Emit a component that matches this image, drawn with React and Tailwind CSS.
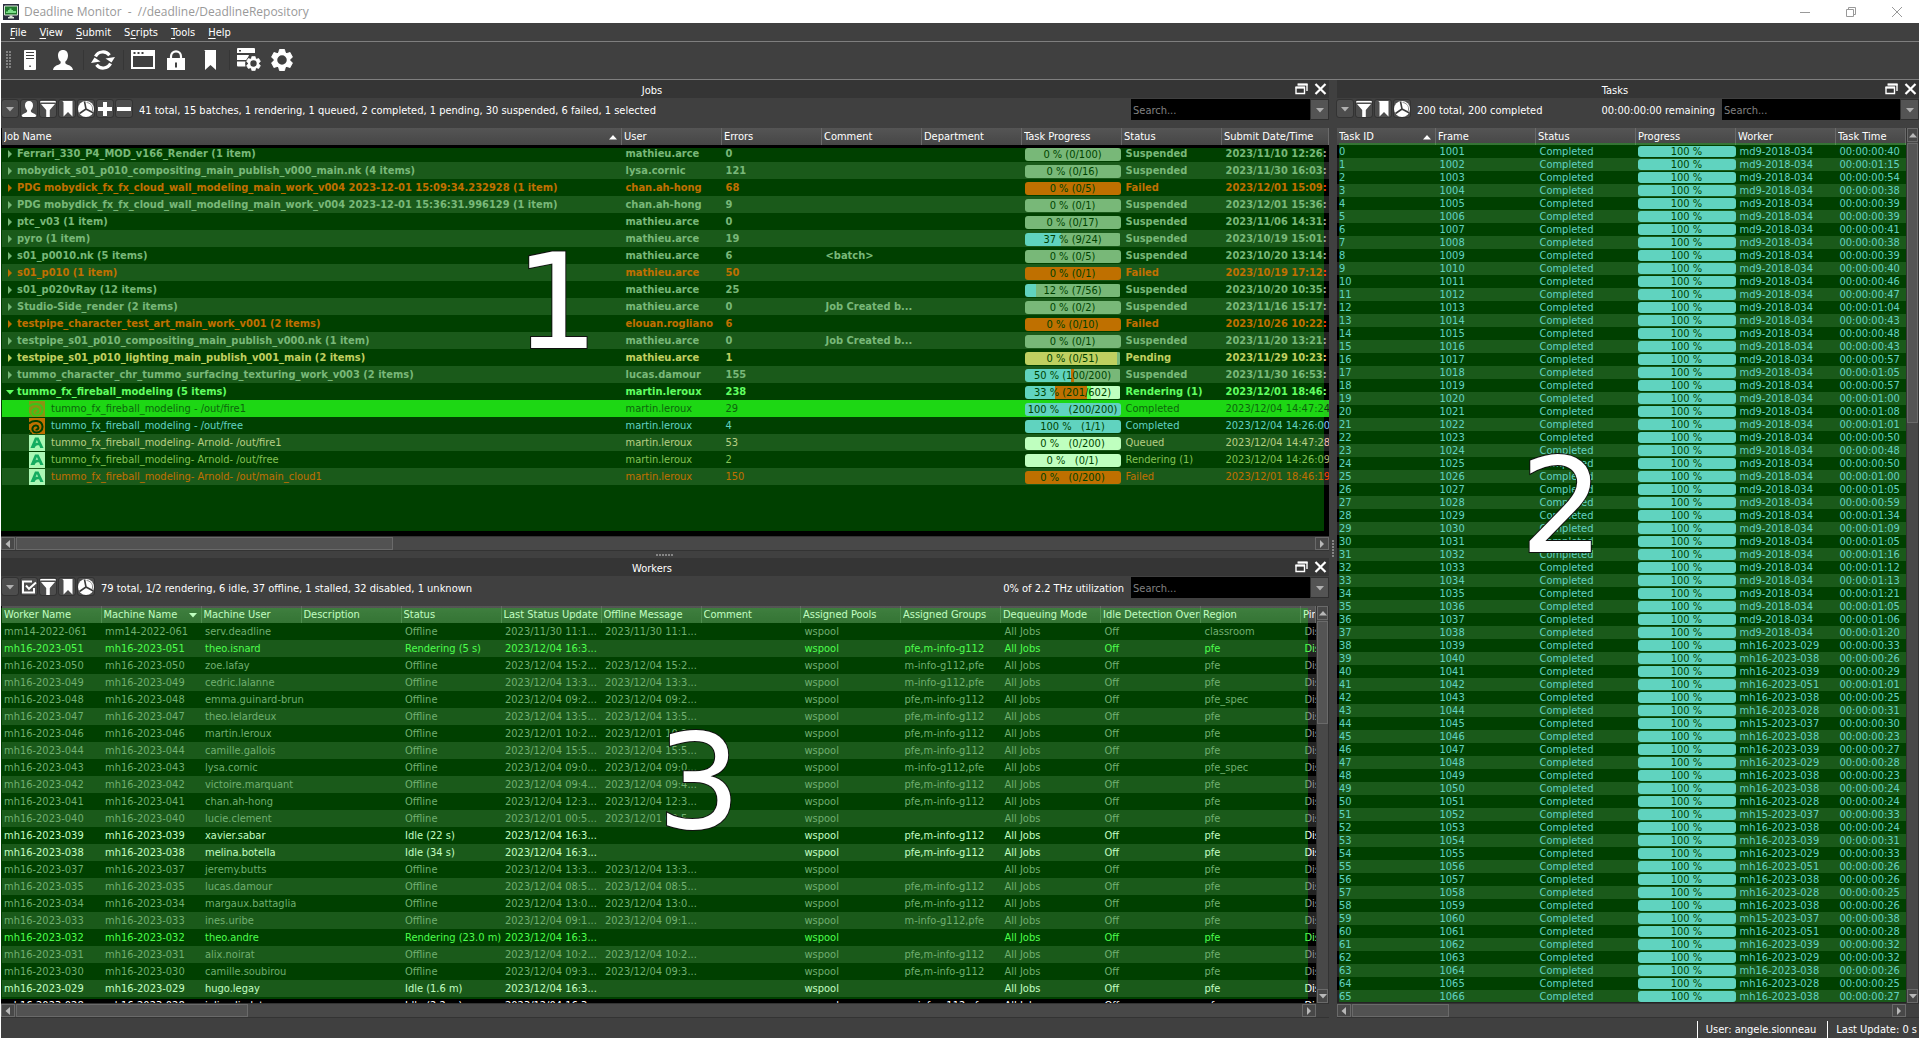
import React from "react";

/* ---------- icons ---------- */

function Gear({ cx, cy, r }) {
  return (
    <g transform={`translate(${cx} ${cy}) scale(${r / 11})`}>
      {[0, 60, 120, 180, 240, 300].map((a) => (
        <path key={a} d="M-3.6 -7 L-2.6 -11 H2.6 L3.6 -7 Z" transform={`rotate(${a})`} strokeWidth="1" stroke="currentColor" strokeLinejoin="round" />
      ))}
      <circle r="6.8" fill="none" stroke="currentColor" strokeWidth="3.6" />
    </g>
  );
}

function Svg({ w, h, children, className = "" }) {
  return (
    <svg width={w} height={h} viewBox={`0 0 ${w} ${h}`} fill="currentColor" className={`shrink-0 ${className}`} aria-hidden="true">
      {children}
    </svg>
  );
}

const ServerIcon = () => (
  <Svg w={12} h={20}>
    <path fillRule="evenodd" d="M1 0h10a1 1 0 0 1 1 1v18a1 1 0 0 1-1 1H1a1 1 0 0 1-1-1V1a1 1 0 0 1 1-1ZM2 2v1h8V2ZM2 5v1h8V5ZM2 8v1h8V8ZM5.300 15.500v1.500h1.500v-1.500Z" />
  </Svg>
);
const userPath = "M10 0c3.200 0 5 2.200 5 5.400 0 2.600-1 4.800-2.600 6.200-.4 1.600.2 2.400 1.600 3 3 1.200 5.300 2 6 5.400H0c.7-3.400 3-4.200 6-5.400 1.400-.6 2-1.400 1.600-3C6 10.200 5 8 5 5.400 5 2.200 6.800 0 10 0Z";
const UserIcon = () => <Svg w={20} h={20}><path d={userPath} /></Svg>;
const RefreshIcon = () => (
  <Svg w={24} h={20}>
    <path d="M4.500 6.500A8.300 8.300 0 0 1 18.500 5.200M19.500 13.500A8.300 8.300 0 0 1 5.500 14.800" fill="none" stroke="currentColor" strokeWidth="3.200" />
    <path d="M14.500 8.500 20.500 12.500 24 7Z M9.500 11.500 3.500 7.500 0 13Z" />
  </Svg>
);
const WindowIcon = () => (
  <Svg w={24} h={19}>
    <path fillRule="evenodd" d="M0 0h24v19H0ZM2 6v11h20V6ZM2.500 2v2h2V2ZM6.500 2v2h2V2ZM10.500 2v2h2V2Z" />
  </Svg>
);
const LockIcon = () => (
  <Svg w={18} h={20}>
    <path d="M4 9V6.500a5 5.200 0 0 1 10 0V9" fill="none" stroke="currentColor" strokeWidth="2.200" />
    <path fillRule="evenodd" d="M0 8h18v12H0ZM8 12.500v5h2v-5Z" />
  </Svg>
);
const BookmarkIcon = () => <Svg w={12} h={20}><path d="M0 0c1 .6 1.200 1 1.200 2H1v18l5.500-5L12 20V0Z" /></Svg>;
const ServerGearIcon = () => (
  <Svg w={24} h={23}>
    <path fillRule="evenodd" d="M1 0h16a1 1 0 0 1 1 1v4H0V1a1 1 0 0 1 1-1ZM2 2v1.500h2V2Z" />
    <path d="M0 7h12l-2 5H0ZM0 13.500h8.500v5H1a1 1 0 0 1-1-1Z" />
    <circle cx="16.500" cy="15.500" r="8.200" fill="#404040" />
    <Gear cx={16.5} cy={15.5} r={7} />
  </Svg>
);
const GearIcon = () => <Svg w={22} h={22}><Gear cx={11} cy={11} r={10.5} /></Svg>;
const AppIcon = () => (
  <Svg w={16} h={16}>
    <path d="M0 0h16v16H0Z" fill="#2c2f3f" />
    <path d="M1.500 2h13v9h-13Z" fill="#1f7a2c" stroke="#d9e4d9" />
    <path d="M3 9V7.500h2V6h1.500V4.500h2V6H10v1h3v2Z" fill="#7be08a" />
    <path d="M6.500 11.500h3V13H11v1.500H5V13h1.500Z" fill="#d9e4d9" />
  </Svg>
);

const SmUser = () => <Svg w={16} h={16}><path d={userPath} transform="scale(.8)" /></Svg>;
const SmFilter = () => <Svg w={16} h={16}><path d="M0 0h16v1.500H0ZM1 3h14L9.800 9v7H6.200V9Z" /></Svg>;
const SmBookmark = () => <Svg w={16} h={16}><path d="M3 0c1 .4 1.500 1 1.500 2v13.500L9 11l4.500 4.500V0Z" /></Svg>;
const SmPie = () => (
  <Svg w={16} h={16}>
    <circle cx="8" cy="8" r="8" />
    <path d="M8 8 6.500.5M8 8l7 3.800M8 8l-6.500 4.500" stroke="#3c3c3c" strokeWidth="1.600" fill="none" />
    <path d="M8.600 1.500c3.500.3 6 3 6 6.500l-.4 2" stroke="#8a8a8a" strokeWidth="1" fill="none" />
  </Svg>
);
const SmPlus = () => <Svg w={16} h={16}><path d="M6 1h4v5h5v4h-5v5H6v-5H1V6h5Z" /></Svg>;
const SmMinus = () => <Svg w={16} h={16}><path d="M1 6h14v4H1Z" /></Svg>;
const SmCheck = () => (
  <Svg w={16} h={16}>
    <path d="M11 2.500H2v11h11V9" fill="none" stroke="currentColor" strokeWidth="2" />
    <path d="m5 6.500 3 3.300L15 3.500" fill="none" stroke="currentColor" strokeWidth="2" />
  </Svg>
);

const Tri = ({ dir = "down", className = "" }) => {
  const d = {
    down: "M0 2h8L4 6.500Z",
    up: "M0 6.500h8L4 2Z",
    left: "M6 0v8L1.500 4Z",
    right: "M2 0v8L6 4Z",
  }[dir];
  return <Svg w={8} h={8} className={className}><path d={d} /></Svg>;
};

const HoudiniIcon = ({ selected }) => (
  <Svg w={16} h={16}>
    <path d="M0 0h16v16H0Z" fill={selected ? "#b87018" : "#ff4000"} />
    <path d="M0 5.500C4 1.500 13 2 13.500 8.500c.2 4-3 6-6 6-3.500 0-5-3-3.500-5.500 1.500-2.200 5-1.800 5.400.6.200 1.600-1.600 2.400-2.700 1.600M0 12c0 2 1.500 3.500 3 4" fill="none" stroke={selected ? "#50b020" : "#000"} strokeWidth="2" />
  </Svg>
);
const ArnoldIcon = () => (
  <Svg w={16} h={16}>
    <path d="M0 0h16v16H0Z" fill="#e4f5f0" />
    <path d="M1.500 13 6 2.500h3.500L14.500 13h-3.300l-1-2.500c-2-.8-3.600-.2-4.600 2.500Zm5-4.800c.8-.5 1.800-.6 2.700-.3L7.900 5Z" fill="#1c9080" />
  </Svg>
);

/* ---------- shared parts ---------- */

function ToolButton({ label, children }) {
  return (
    <button type="button" aria-label={label} className="flex h-[17px] w-4 shrink-0 items-center justify-center overflow-hidden rounded-xs bg-[#4d4d4d] text-white outline outline-[#333]">
      {children}
    </button>
  );
}

function DockTitle({ title }) {
  return (
    <div className="flex h-[18px] shrink-0 items-center bg-[#353535] pr-0.5 pl-2 text-white">
      <h2 className="grow pt-0.5 text-center">{title}</h2>
      <button type="button" aria-label={`Float ${title}`} className="mr-1.5">
        <Svg w={13} h={12}>
          <path d="M3 1.500h9V8M1 4.500h8.500v6H1Z" fill="none" stroke="currentColor" strokeWidth="1.400" />
          <path d="M2.500 .5h10v2h-10ZM.5 3.500h9.500v2H.5Z" />
        </Svg>
      </button>
      <button type="button" aria-label={`Close ${title}`}>
        <Svg w={13} h={12}><path d="m1.500 1 10 10M11.500 1l-10 10" stroke="currentColor" strokeWidth="2.200" /></Svg>
      </button>
    </div>
  );
}

function Search({ id, className }) {
  return (
    <div className={`ml-[7px] flex h-[21px] shrink-0 ${className}`}>
      <label htmlFor={id} className="sr-only">Search</label>
      <input id={id} placeholder="Search..." className="min-w-0 grow bg-black px-0.5 pt-px text-white outline-none placeholder:text-[#808080]" />
      <button type="button" aria-label="Search options" className="flex w-[19px] items-center justify-center border border-[#303030] bg-[#545454] text-[#b0b0b0]">
        <Tri />
      </button>
    </div>
  );
}

function PanelBar({ icons, summary, extra, id, searchClass, className = "" }) {
  return (
    <div className={`flex h-[30px] shrink-0 items-start bg-[#404040] pt-px text-white ${className}`}>
      <div className="flex gap-[3px] pt-px">
        <ToolButton label="Panel menu"><Tri className="text-[#b0b0b0]" /></ToolButton>
        {icons.map(([label, Icon]) => <ToolButton key={label} label={label}><Icon /></ToolButton>)}
      </div>
      <p className="ml-[7px] grow truncate leading-6">{summary}</p>
      <p className="shrink-0 leading-6">{extra}</p>
      <Search id={id} className={searchClass} />
    </div>
  );
}

function Head({ columns }) {
  return (
    <>
      <colgroup>
        {columns.map(([name, w]) => <col key={name} className={w} />)}
      </colgroup>
      <thead>
        <tr className="h-[17px] bg-linear-to-b from-[#555] to-[#464646] text-white">
          {columns.map(([name, , sort]) => (
            <th key={name} scope="col" className="overflow-hidden border-r border-[#6a6a6a] p-0 pt-px pl-0.5 text-left leading-4 font-normal whitespace-nowrap">
              <div className="flex items-center">
                <span className="grow overflow-hidden">{name}</span>
                {sort && <Tri dir={sort} className="mr-1" />}
              </div>
            </th>
          ))}
        </tr>
      </thead>
    </>
  );
}

const arrowButton = "flex shrink-0 items-center justify-center border border-[#6a6a6a] bg-[#484848] text-[#b8b8b8]";

function HScroll({ thumb, corner }) {
  return (
    <div className="flex h-[15px] shrink-0 border-y border-[#333] bg-[#484848]">
      <button type="button" aria-label="Scroll left" className={`w-[14px] ${arrowButton}`}><Tri dir="left" /></button>
      <div className="flex grow"><div className={`ml-px border border-[#6a6a6a] bg-[#525252] ${thumb}`} /></div>
      <button type="button" aria-label="Scroll right" className={`w-[14px] ${arrowButton}`}><Tri dir="right" /></button>
      {corner && <div className="w-[13px] shrink-0 bg-[#404040]" />}
    </div>
  );
}

function VScroll({ thumb }) {
  return (
    <div className="flex w-[13px] shrink-0 flex-col border-x border-[#333] bg-[#484848]">
      <button type="button" aria-label="Scroll up" className={`h-[14px] ${arrowButton}`}><Tri dir="up" /></button>
      <div className="grow"><div className={`mt-px border border-[#6a6a6a] bg-[#545454] ${thumb}`} /></div>
      <button type="button" aria-label="Scroll down" className={`h-[14px] ${arrowButton}`}><Tri dir="down" /></button>
    </div>
  );
}

function Zone({ number, className, numberClass }) {
  return (
    <div className={`pointer-events-none absolute ${className}`}>
      <div className="absolute inset-0 bg-[#00ff00]/25" />
      <span className={`absolute -translate-x-1/2 font-['DejaVu_Sans',sans-serif] text-[132px] leading-none text-white [-webkit-text-stroke:2px_#111] [paint-order:stroke_fill] ${numberClass}`}>
        {number}
      </span>
    </div>
  );
}

const zebra = (i) => (i % 2 ? "bg-[#232323]" : "bg-black");
const cellBase = "p-0 pt-px pl-1 leading-4 whitespace-nowrap";
const cell = `overflow-hidden ${cellBase}`;
const shortCell = "overflow-hidden p-0 pl-1 whitespace-nowrap";

/* ---------- jobs ---------- */

const tone = {
  Suspended: "text-[#a0a0a0]",
  Failed: "text-[#ff4000]",
  Pending: "text-[#ffc080]",
  Rendering: "text-[#80ff80]",
  Completed: "text-[#80c4ff]",
  Queued: "text-[#f0c0b0]",
  Active: "text-[#b0b070]",
  Selected: "text-[#103010]",
};
const G = "#a0a0a0", O = "#ff4000", T = "#80c4ff", Y = "#ffc080", W = "#ffffff", L = "#80ff80";

const jobs = [
  ["Ferrari_330_P4_MOD_v166_Render (1 item)", "mathieu.arce", "0", "", "0 % (0/100)", [[G, 100]], "Suspended", "2023/11/10 12:26:"],
  ["mobydick_s01_p010_compositing_main_publish_v000_main.nk (4 items)", "lysa.cornic", "121", "", "0 % (0/16)", [[G, 100]], "Suspended", "2023/11/30 16:03:"],
  ["PDG mobydick_fx_fx_cloud_wall_modeling_main_work_v004 2023-12-01 15:09:34.232928 (1 item)", "chan.ah-hong", "68", "", "0 % (0/5)", [[O, 100]], "Failed", "2023/12/01 15:09:"],
  ["PDG mobydick_fx_fx_cloud_wall_modeling_main_work_v004 2023-12-01 15:36:31.996129 (1 item)", "chan.ah-hong", "9", "", "0 % (0/1)", [[G, 100]], "Suspended", "2023/12/01 15:36:"],
  ["ptc_v03 (1 item)", "mathieu.arce", "0", "", "0 % (0/17)", [[G, 100]], "Suspended", "2023/11/06 14:31:"],
  ["pyro (1 item)", "mathieu.arce", "19", "", "37 % (9/24)", [[T, 38], [G, 62]], "Suspended", "2023/10/19 15:01:"],
  ["s01_p0010.nk (5 items)", "mathieu.arce", "6", "<batch>", "0 % (0/5)", [[G, 100]], "Suspended", "2023/10/20 13:14:"],
  ["s01_p010 (1 item)", "mathieu.arce", "50", "", "0 % (0/1)", [[O, 100]], "Failed", "2023/10/19 17:12:"],
  ["s01_p020vRay (12 items)", "mathieu.arce", "25", "", "12 % (7/56)", [[T, 12], [G, 88]], "Suspended", "2023/10/20 10:35:"],
  ["Studio-Side_render (2 items)", "mathieu.arce", "0", "Job Created b...", "0 % (0/2)", [[G, 100]], "Suspended", "2023/11/16 15:17:"],
  ["testpipe_character_test_art_main_work_v001 (2 items)", "elouan.rogliano", "6", "", "0 % (0/10)", [[O, 100]], "Failed", "2023/10/26 10:22:"],
  ["testpipe_s01_p010_compositing_main_publish_v000.nk (1 item)", "mathieu.arce", "0", "Job Created b...", "0 % (0/1)", [[G, 100]], "Suspended", "2023/11/20 13:21:"],
  ["testpipe_s01_p010_lighting_main_publish_v001_main (2 items)", "mathieu.arce", "1", "", "0 % (0/51)", [[Y, 96], [G, 4]], "Pending", "2023/11/29 10:23:"],
  ["tummo_character_chr_tummo_surfacing_texturing_work_v003 (2 items)", "lucas.damour", "155", "", "50 % (100/200)", [[T, 48], [O, 4], [G, 48]], "Suspended", "2023/11/30 16:53:"],
  ["tummo_fx_fireball_modeling (5 items)", "martin.leroux", "238", "", "33 % (201/602)", [[T, 32], [O, 33], [L, 4], [W, 31]], "Rendering (1)", "2023/12/01 18:46:", "Rendering"],
  ["tummo_fx_fireball_modeling - /out/fire1", "martin.leroux", "29", "", "100 %   (200/200)", [[T, 100]], "Completed", "2023/12/04 14:47:24", "Selected", "houdini"],
  ["tummo_fx_fireball_modeling - /out/free", "martin.leroux", "4", "", "100 %   (1/1)", [[T, 100]], "Completed", "2023/12/04 14:26:00", "Completed", "houdini"],
  ["tummo_fx_fireball_modeling- Arnold- /out/fire1", "martin.leroux", "53", "", "0 %   (0/200)", [[W, 100]], "Queued", "2023/12/04 14:47:28", "Queued", "arnold"],
  ["tummo_fx_fireball_modeling- Arnold- /out/free", "martin.leroux", "2", "", "0 %   (0/1)", [[W, 100]], "Rendering (1)", "2023/12/04 14:26:09", "Active", "arnold"],
  ["tummo_fx_fireball_modeling- Arnold- /out/main_cloud1", "martin.leroux", "150", "", "0 %   (0/200)", [[O, 100]], "Failed", "2023/12/01 18:46:19", "Failed", "arnold"],
];

const jobColumns = [
  ["Job Name", "w-auto", "up"],
  ["User", "w-[100px]"],
  ["Errors", "w-[100px]"],
  ["Comment", "w-[100px]"],
  ["Department", "w-[100px]"],
  ["Task Progress", "w-[100px]"],
  ["Status", "w-[100px]"],
  ["Submit Date/Time", "w-[107px]"],
];

function JobBar({ text, parts }) {
  return (
    <div className="relative mt-px flex h-[13px] w-24 overflow-hidden rounded-[3px]">
      {parts.map(([color, pct], i) => <div key={i} style={{ width: `${pct}%`, background: color }} />)}
      <span className="absolute inset-0 text-center leading-[14px] font-normal whitespace-pre text-black">{text}</span>
    </div>
  );
}

function JobsPanel() {
  return (
    <section className="relative flex min-h-0 flex-[471_1_0%] flex-col">
      <DockTitle title="Jobs" />
      <PanelBar
        id="job-search"
        className="pl-px"
        searchClass="w-[198px]"
        icons={[["My jobs", SmUser], ["Filter", SmFilter], ["Bookmarks", SmBookmark], ["Chart", SmPie], ["Expand all", SmPlus], ["Collapse all", SmMinus]]}
        summary="41 total, 15 batches, 1 rendering, 1 queued, 2 completed, 1 pending, 30 suspended, 6 failed, 1 selected"
      />
      <div className="min-h-0 grow overflow-hidden bg-black pl-px">
        <table className="w-full table-fixed border-collapse">
          <Head columns={jobColumns} />
          <tbody>
            {jobs.map(([name, user, errors, comment, text, parts, status, date, color, icon], i) => (
              <tr key={name} className={`h-[17px] ${color === "Selected" ? "bg-[#27c91b]" : zebra(i)} ${tone[color || status]} ${icon ? "font-normal" : "font-bold"}`}>
                <td className={cell}>
                  {icon ? (
                    <div className="ml-[23px] flex items-center gap-1.5">
                      {icon === "houdini" ? <HoudiniIcon selected={color === "Selected"} /> : <ArnoldIcon />}
                      <span>{name}</span>
                    </div>
                  ) : (
                    <div className="flex items-center gap-[3px]">
                      <Tri dir={status === "Rendering (1)" ? "down" : "right"} />
                      <span>{name}</span>
                    </div>
                  )}
                </td>
                <td className={cell}>{user}</td>
                <td className={cell}>{errors}</td>
                <td className={cell}>{comment}</td>
                <td className={cell} />
                <td className="p-0 pl-[3px]"><JobBar text={text} parts={parts} /></td>
                <td className={cell}>{status}</td>
                <td className={cell}>{date}</td>
              </tr>
            ))}
          </tbody>
        </table>
      </div>
      <HScroll thumb="w-[29%]" />
      <Zone number="1" className="top-[68px] right-[5px] bottom-5 left-0" numberClass="top-[23%] left-[42%]" />
    </section>
  );
}

/* ---------- workers ---------- */

const A = "pfe,m-info-g112", B = "m-info-g112,pfe";
const workers = [
  ["mm14-2022-061", "serv.deadline", "Offline", "11/30 11:1", "", "classroom"],
  ["mh16-2023-051", "theo.isnard", "Rendering (5 s)", "12/04 16:3", A],
  ["mh16-2023-050", "zoe.lafay", "Offline", "12/04 15:2", B],
  ["mh16-2023-049", "cedric.lalanne", "Offline", "12/04 13:3", B],
  ["mh16-2023-048", "emma.guinard-brun", "Offline", "12/04 09:2", A, "pfe_spec"],
  ["mh16-2023-047", "theo.lelardeux", "Offline", "12/04 13:5", A],
  ["mh16-2023-046", "martin.leroux", "Offline", "12/01 10:2", A],
  ["mh16-2023-044", "camille.gallois", "Offline", "12/04 15:5", A],
  ["mh16-2023-043", "lysa.cornic", "Offline", "12/04 09:0", B, "pfe_spec"],
  ["mh16-2023-042", "victoire.marquant", "Offline", "12/04 09:4", A],
  ["mh16-2023-041", "chan.ah-hong", "Offline", "12/04 12:3", A],
  ["mh16-2023-040", "lucie.clement", "Offline", "12/01 00:5", ""],
  ["mh16-2023-039", "xavier.sabar", "Idle (22 s)", "12/04 16:3", A],
  ["mh16-2023-038", "melina.botella", "Idle (34 s)", "12/04 16:3", A],
  ["mh16-2023-037", "jeremy.butts", "Offline", "12/04 13:3", ""],
  ["mh16-2023-035", "lucas.damour", "Offline", "12/04 08:5", A],
  ["mh16-2023-034", "margaux.battaglia", "Offline", "12/04 13:0", A],
  ["mh16-2023-033", "ines.uribe", "Offline", "12/04 09:1", B],
  ["mh16-2023-032", "theo.andre", "Rendering (23.0 m)", "12/04 16:3", ""],
  ["mh16-2023-031", "alix.noirat", "Offline", "12/04 10:2", A],
  ["mh16-2023-030", "camille.soubirou", "Offline", "12/04 09:3", A],
  ["mh16-2023-029", "hugo.legay", "Idle (1.6 m)", "12/04 16:3", ""],
  ["mh16-2023-028", "julien.lindot", "Idle (2.2 m)", "12/04 16:3", B],
];

const workerColumns = [
  ["Worker Name", "w-[99px]"],
  ["Machine Name", "w-[100px]", "down"],
  ["Machine User", "w-[100px]"],
  ["Description", "w-[100px]"],
  ["Status", "w-[100px]"],
  ["Last Status Update", "w-[100px]"],
  ["Offline Message", "w-[100px]"],
  ["Comment", "w-auto"],
  ["Assigned Pools", "w-[100px]"],
  ["Assigned Groups", "w-[100px]"],
  ["Dequeuing Mode", "w-[100px]"],
  ["Idle Detection Overr", "w-[100px]"],
  ["Region", "w-[100px]"],
  ["Pin", "w-[15px]"],
];

function workerTone(status) {
  if (status === "Offline") return "text-[#959595]";
  return status.startsWith("Idle") ? "text-white" : "text-[#66ff66]";
}

function WorkersPanel() {
  return (
    <section className="relative flex min-h-0 flex-[460_1_0%] flex-col">
      <DockTitle title="Workers" />
      <PanelBar
        id="worker-search"
        className="pl-px"
        searchClass="w-[198px]"
        icons={[["Select", SmCheck], ["Filter", SmFilter], ["Bookmarks", SmBookmark], ["Chart", SmPie]]}
        summary="79 total, 1/2 rendering, 6 idle, 37 offline, 1 stalled, 32 disabled, 1 unknown"
        extra="0% of 2.2 THz utilization"
      />
      <div className="flex min-h-0 grow">
        <div className="min-w-0 grow overflow-hidden bg-black pl-px">
          <table className="w-full table-fixed border-collapse">
            <Head columns={workerColumns} />
            <tbody>
              {workers.map(([name, user, status, time, groups, region = "pfe"], i) => {
                const stamp = `2023/${time}...`;
                return (
                  <tr key={name} className={`h-[17px] ${zebra(i)} ${workerTone(status)}`}>
                    <td className="overflow-hidden p-0 pt-px pl-0.5 leading-4 whitespace-nowrap">{name}</td>
                    <td className={cell}>{name}</td>
                    <td className={cellBase}>{user}</td>
                    <td className={cell} />
                    <td className={cell}>{status}</td>
                    <td className={cell}>{stamp}</td>
                    <td className={cell}>{status === "Offline" ? stamp : ""}</td>
                    <td className={cell} />
                    <td className={cell}>wspool</td>
                    <td className={cell}>{groups}</td>
                    <td className={cell}>All Jobs</td>
                    <td className={cell}>Off</td>
                    <td className={cell}>{region}</td>
                    <td className={cell}>Dis</td>
                  </tr>
                );
              })}
            </tbody>
          </table>
        </div>
        <VScroll thumb="h-[28%]" />
      </div>
      <HScroll thumb="w-[18%]" corner />
      <Zone number="3" className="top-[50px] right-[21px] bottom-[19px] left-0" numberClass="top-[108px] left-[698px]" />
    </section>
  );
}

/* ---------- tasks ---------- */

const taskTimes = (
  "00:40 01:15 00:54 00:38 00:39 00:39 00:41 00:38 00:39 00:40 00:46 00:47 01:04 00:43 00:48 00:43 00:57 01:05 00:57 01:00 01:08 01:01 " +
  "00:50 00:48 00:50 01:00 01:05 00:59 01:34 01:09 01:05 01:16 01:12 01:13 01:21 01:05 01:06 01:20 00:33 00:26 00:29 01:01 00:25 00:31 " +
  "00:30 00:23 00:27 00:28 00:23 00:24 00:24 00:33 00:24 00:31 00:33 00:26 00:26 00:25 00:26 00:38 00:28 00:32 00:32 00:26 00:25 00:27"
).split(" ");
const lateWorkers = "29 38 39 51 38 28 37 38 39 29 38 38 28 37 38 39 29 51 38 28 38 37 51 39 29 38 28 38".split(" ");

function taskWorker(i) {
  if (i < 38) return "md9-2018-034";
  const n = lateWorkers[i - 38];
  return `${n === "37" ? "mh15" : "mh16"}-2023-0${n}`;
}

const taskColumns = [
  ["Task ID", "w-auto", "up"],
  ["Frame", "w-[100px]"],
  ["Status", "w-[100px]"],
  ["Progress", "w-[100px]"],
  ["Worker", "w-[100px]"],
  ["Task Time", "w-[70px]"],
];

function TasksPanel() {
  return (
    <section className="relative flex min-h-0 w-[582px] shrink-0 flex-col">
      <DockTitle title="Tasks" />
      <PanelBar
        id="task-search"
        searchClass="w-[197px]"
        icons={[["Filter", SmFilter], ["Bookmarks", SmBookmark], ["Chart", SmPie]]}
        summary="200 total, 200 completed"
        extra="00:00:00:00 remaining"
      />
      <div className="flex min-h-0 grow">
        <div className="min-w-0 grow overflow-hidden bg-black">
          <table className="w-full table-fixed border-collapse leading-[13px]">
            <Head columns={taskColumns} />
            <tbody>
              {taskTimes.map((time, i) => (
                <tr key={i} className={`h-[13px] text-[#80c4ff] ${zebra(i)}`}>
                  <td className="p-0 pl-0.5">{i}</td>
                  <td className={shortCell}>{1001 + i}</td>
                  <td className={shortCell}>Completed</td>
                  <td className="p-0 pl-0.5"><div className="h-[11px] w-[98px] rounded-[3px] bg-[#80c4ff] text-center leading-[11px] text-black">100 %</div></td>
                  <td className={shortCell}>{taskWorker(i)}</td>
                  <td className={shortCell}>00:00:{time}</td>
                </tr>
              ))}
            </tbody>
          </table>
        </div>
        <VScroll thumb="h-[33%]" />
      </div>
      <HScroll thumb="w-[18%]" corner />
      <Zone number="2" className="top-[63px] right-[13px] bottom-4 left-0.5" numberClass="top-[297px] left-[223px]" />
    </section>
  );
}

/* ---------- window ---------- */

const menus = [["F", "ile"], ["V", "iew"], ["S", "ubmit"], ["Sc", "ripts"], ["T", "ools"], ["H", "elp"]];

const Sep = () => <div className="h-5 w-px shrink-0 bg-[#363636]" />;

function IconButton({ label, className, children }) {
  return <button type="button" aria-label={label} className={`shrink-0 ${className}`}>{children}</button>;
}

export default function App() {
  return (
    <div className="flex h-screen flex-col overflow-hidden bg-[#404040] font-['DejaVu_Sans_Condensed','DejaVu_Sans',sans-serif] text-[11px] leading-[17px]">
      <header className="flex h-[23px] shrink-0 items-center bg-white pr-[17px] pl-[3px] text-[#999]">
        <AppIcon />
        <h1 className="ml-[5px] grow font-['Open_Sans',sans-serif] text-xs whitespace-pre">Deadline Monitor  -  //deadline/DeadlineRepository</h1>
        <div className="flex items-center gap-9">
          <button type="button" aria-label="Minimize"><Svg w={10} h={10}><path d="M0 5h10v1H0Z" /></Svg></button>
          <button type="button" aria-label="Restore">
            <Svg w={10} h={10}><path d="M.5 2.500h7v7h-7ZM2.500 2.500v-2h7v7h-2" fill="none" stroke="currentColor" /></Svg>
          </button>
          <button type="button" aria-label="Close"><Svg w={10} h={10}><path d="m0 0 10 10M10 0 0 10" stroke="currentColor" /></Svg></button>
        </div>
      </header>

      <div className="flex min-h-0 grow flex-col border-l border-white">
        <nav className="flex h-[18px] shrink-0 items-center gap-[13px] bg-[#404040] pl-[9px] text-white">
          {menus.map(([a, b]) => (
            <button key={b} type="button">
              {a.length > 1 ? a[0] : ""}<u className="underline-offset-2">{a.slice(-1)}</u>{b}
            </button>
          ))}
        </nav>
        <div className="flex h-[39px] shrink-0 items-center border-y border-[#7f7f7f] bg-[#404040] pb-0.5 pl-[5px] text-white">
          <Svg w={5} h={18} className="text-[#808080]">
            {[0, 3, 6, 9, 12, 15].map((y) => <path key={y} d={`M0 ${y}h2v2H0ZM3 ${y}h2v2H3Z`} />)}
          </Svg>
          <IconButton label="Repository" className="ml-[13px]"><ServerIcon /></IconButton>
          <IconButton label="User" className="mr-[10px] ml-[17px]"><UserIcon /></IconButton>
          <Sep />
          <IconButton label="Refresh" className="mr-2 ml-[7px]"><RefreshIcon /></IconButton>
          <Sep />
          <IconButton label="New panel" className="ml-[7px]"><WindowIcon /></IconButton>
          <IconButton label="Lock panels" className="ml-3"><LockIcon /></IconButton>
          <IconButton label="Pinned layouts" className="mr-[13px] ml-[19px]"><BookmarkIcon /></IconButton>
          <Sep />
          <IconButton label="Repository options" className="ml-[7px]"><ServerGearIcon /></IconButton>
          <IconButton label="Options" className="ml-2.5"><GearIcon /></IconButton>
        </div>

        <main className="flex min-h-0 grow">
          <div className="flex min-w-0 grow flex-col">
            <JobsPanel />
            <div className="flex h-[7px] shrink-0 items-center justify-center text-[#858585]">
              <Svg w={18} h={2}>{[0, 3, 6, 9, 12, 15].map((x) => <path key={x} d={`M${x} 0h2v2h-2Z`} />)}</Svg>
            </div>
            <WorkersPanel />
          </div>
          <div className="flex w-2 shrink-0 items-center justify-center text-[#858585]">
            <Svg w={2} h={18}>{[0, 3, 6, 9, 12, 15].map((y) => <path key={y} d={`M0 ${y}h2v2H0Z`} />)}</Svg>
          </div>
          <TasksPanel />
        </main>

        <footer className="flex h-5 shrink-0 items-end justify-end pr-0.5 text-white">
          <span className="border-l border-white pr-[11px] pl-2">User: angele.sionneau</span>
          <span className="border-l border-white pl-2">Last Update: 0 s</span>
        </footer>
      </div>
    </div>
  );
}
